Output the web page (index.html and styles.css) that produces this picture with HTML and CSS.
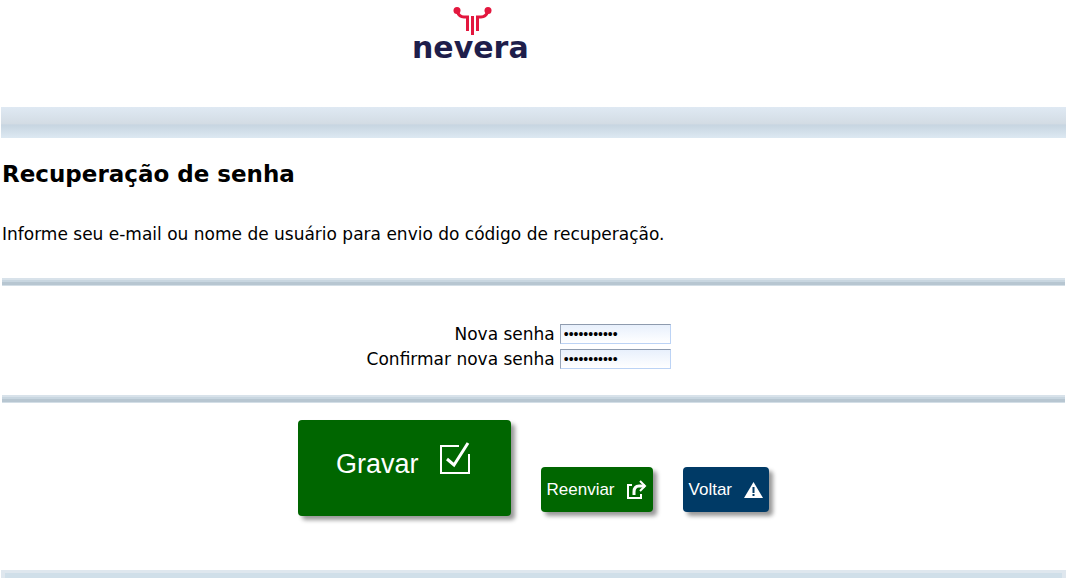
FILE: index.html
```html
<!DOCTYPE html>
<html lang="pt-BR">
<head>
    <meta charset="UTF-8">
    <meta name="viewport" content="width=device-width, initial-scale=1.0">
    <title>Recuperação de senha</title>
    <link rel="stylesheet" href="styles.css">
</head>
<body>
    <header class="header">
        <svg class="logo" width="124" height="72" viewBox="0 0 124 72" role="img" aria-label="nevera">
            <g fill="none" stroke="#e3173e" stroke-width="3">
                <path d="M47 11 Q49 17 54 17 H57.500 V31"/>
                <path d="M78 11 Q76 17 71 17 H67.500 V31"/>
                <path d="M62.500 16 V35"/>
            </g>
            <g fill="#e3173e">
                <circle cx="47" cy="10.500" r="3.500"/>
                <circle cx="78" cy="10.500" r="3.500"/>
            </g>
            <text class="logo-text" x="2" y="58">nevera</text>
        </svg>
    </header>

    <div class="bar"></div>

    <main>
        <h1>Recuperação de senha</h1>
        <p class="intro">Informe seu e-mail ou nome de usuário para envio do código de recuperação.</p>

        <form>
            <hr>
            <div class="fields">
                <label for="nova-senha">Nova senha</label>
                <input type="password" id="nova-senha" value="12345678901">
                <label for="confirmar-senha">Confirmar nova senha</label>
                <input type="password" id="confirmar-senha" value="12345678901">
            </div>
            <hr>

            <div class="buttons">
                <button type="submit" class="btn btn-large">
                    <span>Gravar</span>
                    <svg width="32" height="34" viewBox="0 0 32 34" fill="none" stroke="#fff" stroke-width="2">
                        <path d="M20 5 H2 V32 H30 V13"/>
                        <path d="M8 18 L15 24 L29 2" stroke-width="3"/>
                    </svg>
                </button>
                <button type="button" class="btn">
                    <span>Reenviar</span>
                    <svg width="20" height="20" viewBox="0 0 20 20" fill="none" stroke="#fff" stroke-width="2">
                        <path d="M5 5 H1 V18 H14 V14"/>
                        <path d="M7 15 V12 Q7 6 12 6 H18" stroke-width="3"/>
                        <path d="M13 1 L18 6 L13 11"/>
                    </svg>
                </button>
                <button type="button" class="btn btn-blue">
                    <span>Voltar</span>
                    <svg width="19" height="20" viewBox="0 0 19 20">
                        <path d="M9.500 2 L19 18 H0 Z" fill="#fff"/>
                        <path d="M9.500 7 V13 M9.500 14 V16" stroke="#003a66" stroke-width="2"/>
                    </svg>
                </button>
            </div>
        </form>
    </main>

    <footer class="bar bar-footer"></footer>
</body>
</html>
```
FILE: styles.css
```css
body {
    margin: 0 6px 0 1px;
    font-family: Verdana, "DejaVu Sans", sans-serif;
    font-size: 17px;
    color: #000;
    background: #fff;
    overflow-x: hidden;
}

.header {
    display: flex;
    justify-content: center;
    align-items: flex-start;
    height: 107px;
    padding-right: 124px;
}

.logo-text {
    font-family: "DejaVu Sans", sans-serif;
    font-size: 30px;
    font-weight: bold;
    fill: #1e1e4b;
}

/* Horizontal bars */
.bar {
    height: 31px;
    background: linear-gradient(#dfe9f3, #d3dce4 54%, #c7d5e1 58%, #dde9f2);
}

.bar-footer {
    box-sizing: border-box;
    height: 8px;
    border: solid #dfe7ee;
    border-width: 3px 4px 0;
    background: #d0dfe9;
}

hr {
    height: 8px;
    margin: 0 1px;
    border: 0;
    background: linear-gradient(#d8e2ea 0 2px, #c8d6e0 2px 4px, #b7c6d1 4px 7px, #d3dee6 7px);
}

h1 {
    margin: 20px 1px 34px;
    font-size: 23px;
    line-height: 32px;
}

.intro {
    margin: 0 1px 34px;
    line-height: 20px;
}

/* Password fields */
.fields {
    display: grid;
    grid-template-columns: 52% 1fr;
    gap: 5px;
    align-items: center;
    margin: 0 1px;
    padding: 38px 0 26px;
}

.fields label {
    line-height: 20px;
    text-align: right;
}

.fields input {
    box-sizing: border-box;
    width: 111px;
    height: 20px;
    padding: 0 3px;
    border: 1px solid #bcd3f5;
    border-top: 1px solid #8e9bae;
    border-left: 1px solid #98a5b8;
    font-family: "Liberation Sans", Arial, sans-serif;
    font-size: 14px;
    background: linear-gradient(#e8f0fc, #fff);
}

/* Buttons */
.buttons {
    display: flex;
    justify-content: center;
    align-items: flex-end;
    gap: 30px;
    padding: 17px 0 54px;
}

.btn {
    display: flex;
    align-items: center;
    gap: 12px;
    height: 45px;
    margin: 0 0 4px;
    padding: 0 6px;
    border: 0;
    border-radius: 4px;
    font-family: "Liberation Sans", Arial, sans-serif;
    font-size: 17px;
    color: #fff;
    background: #006600;
    box-shadow: 4px 4px 4px #999;
    cursor: pointer;
}

.btn-large {
    gap: 20px;
    height: 96px;
    margin: 0;
    padding: 0 40px 8px 38px;
    font-size: 27px;
}

.btn-large svg {
    margin-bottom: 12px;
}

.btn-blue {
    background: #003a66;
}
```
